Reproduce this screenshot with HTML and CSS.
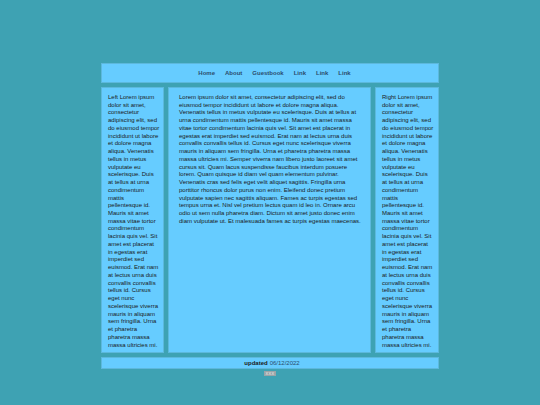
FILE: index.html
```html
<!DOCTYPE html>
<html>
<head>
<meta charset="utf-8">
<link rel="stylesheet" href="styles.css">
</head>
<body>
<div class="wrap">
  <header class="panel header">
    <nav class="nav">
      <a href="#">Home</a>
      <a href="#">About</a>
      <a href="#">Guestbook</a>
      <a href="#">Link</a>
      <a href="#">Link</a>
      <a href="#">Link</a>
    </nav>
  </header>
  <div class="main">
    <aside class="panel side left">Left Lorem ipsum dolor sit amet, consectetur adipiscing elit, sed do eiusmod tempor incididunt ut labore et dolore magna aliqua. Venenatis tellus in metus vulputate eu scelerisque. Duis at tellus at urna condimentum mattis pellentesque id. Mauris sit amet massa vitae tortor condimentum lacinia quis vel. Sit amet est placerat in egestas erat imperdiet sed euismod. Erat nam at lectus urna duis convallis convallis tellus id. Cursus eget nunc scelerisque viverra mauris in aliquam sem fringilla. Urna et pharetra pharetra massa massa ultricies mi.</aside>
    <section class="panel content">Lorem ipsum dolor sit amet, consectetur adipiscing elit, sed do eiusmod tempor incididunt ut labore et dolore magna aliqua. Venenatis tellus in metus vulputate eu scelerisque. Duis at tellus at urna condimentum mattis pellentesque id. Mauris sit amet massa vitae tortor condimentum lacinia quis vel. Sit amet est placerat in egestas erat imperdiet sed euismod. Erat nam at lectus urna duis convallis convallis tellus id. Cursus eget nunc scelerisque viverra mauris in aliquam sem fringilla. Urna et pharetra pharetra massa massa ultricies mi. Semper viverra nam libero justo laoreet sit amet cursus sit. Quam lacus suspendisse faucibus interdum posuere lorem. Quam quisque id diam vel quam elementum pulvinar. Venenatis cras sed felis eget velit aliquet sagittis. Fringilla urna porttitor rhoncus dolor purus non enim. Eleifend donec pretium vulputate sapien nec sagittis aliquam. Fames ac turpis egestas sed tempus urna et. Nisl vel pretium lectus quam id leo in. Ornare arcu odio ut sem nulla pharetra diam. Dictum sit amet justo donec enim diam vulputate ut. Et malesuada fames ac turpis egestas maecenas.</section>
    <aside class="panel side right">Right Lorem ipsum dolor sit amet, consectetur adipiscing elit, sed do eiusmod tempor incididunt ut labore et dolore magna aliqua. Venenatis tellus in metus vulputate eu scelerisque. Duis at tellus at urna condimentum mattis pellentesque id. Mauris sit amet massa vitae tortor condimentum lacinia quis vel. Sit amet est placerat in egestas erat imperdiet sed euismod. Erat nam at lectus urna duis convallis convallis tellus id. Cursus eget nunc scelerisque viverra mauris in aliquam sem fringilla. Urna et pharetra pharetra massa massa ultricies mi.</aside>
  </div>
  <footer class="panel footer"><b>updated</b> <span class="date">06/12/2022</span></footer>
  <div class="badges"><span class="badge">XXX</span></div>
</div>
</body>
</html>
```
FILE: styles.css
```css
html, body {
  margin: 0;
  padding: 0;
}
body {
  background: #3ea2b3;
  font-family: "Liberation Sans", Arial, sans-serif;
  color: #1a1a1a;
}
.wrap {
  width: 338px;
  margin: 63px auto 0;
}
.panel {
  background: #66ccff;
  border: 1px solid #5cb8dc;
  box-sizing: border-box;
}
.header {
  height: 20px;
  display: flex;
  align-items: center;
  justify-content: center;
  padding-left: 9px;
}
.nav {
  display: flex;
  gap: 10px;
  font-size: 6px;
  font-weight: bold;
}
.nav a {
  color: #2b4d6e;
  text-decoration: none;
}
.main {
  display: flex;
  gap: 4px;
  margin-top: 4px;
  height: 266px;
}
.side {
  flex: none;
  padding: 6px 4px 6px 6px;
  font-size: 6px;
  line-height: 7.73px;
}
.left {
  width: 63px;
  padding-right: 3.5px;
}
.right {
  width: 64px;
  padding-right: 4.5px;
}
.content {
  flex: 1;
  padding: 6px 9px 6px 10px;
  font-size: 6px;
  line-height: 7.73px;
}
.footer {
  margin-top: 4px;
  height: 12px;
  font-size: 6px;
  display: flex;
  align-items: center;
  justify-content: center;
  gap: 2px;
  padding-left: 4px;
}
.footer b {
  color: #1a1a1a;
}
.date {
  color: #2b4d6e;
}
.badges {
  display: flex;
  justify-content: center;
  margin-top: 2px;
}
.badge {
  background: #9aa4a8;
  color: #eee;
  font-size: 4px;
  line-height: 5px;
  padding: 0 2px;
  letter-spacing: 0.3px;
}
```
